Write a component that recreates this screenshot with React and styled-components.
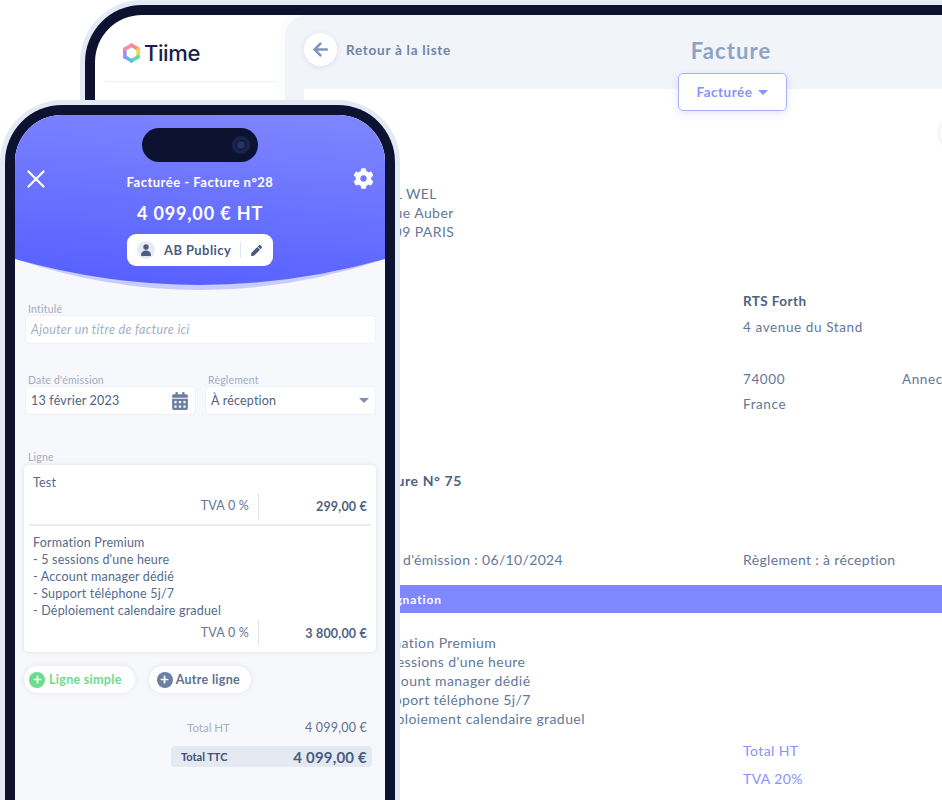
import React from "react";
import styled, { createGlobalStyle } from "styled-components";
import { FaArrowLeft, FaCog, FaPen, FaCalendarAlt, FaPlus } from "react-icons/fa";

const Global = createGlobalStyle`
  html, body { margin: 0; padding: 0; background: #fff; }
  * { box-sizing: border-box; }
  body { font-family: "Lato", "Noto Sans", sans-serif; }
`;

const Stage = styled.div`
  position: relative;
  width: 942px;
  height: 800px;
  overflow: hidden;
  background: #fff;
`;

/* tablet behind */
const Tablet = styled.div`
  position: absolute;
  left: 80px;
  top: 0;
  width: 1112px;
  height: 900px;
  padding: 5px;
  background: #e3eaf3;
  border-radius: 62px;
`;

const TabletBezel = styled.div`
  height: 100%;
  padding: 10px;
  background: #0c1230;
  border-radius: 57px;
`;

const TabletScreen = styled.div`
  display: flex;
  height: 100%;
  background: #fff;
  border-radius: 47px;
  overflow: hidden;
`;

const Sidebar = styled.aside`
  width: 190px;
  flex: none;
  padding: 0 9px 0 10px;
`;

const Logo = styled.div`
  display: flex;
  align-items: center;
  gap: 3px;
  height: 67px;
  padding: 9px 0 0 17px;
  border-bottom: 1px solid #e8eef5;
  font-family: "Inter", sans-serif;
  font-size: 22px;
  font-weight: 500;
  letter-spacing: -0.4px;
  color: #16214d;
`;

const Main = styled.main`
  flex: 1;
  display: flex;
  flex-direction: column;
  background: #f1f4f9;
  border-radius: 22px 0 0 0;
  box-shadow: 0 0 10px rgba(120, 140, 170, 0.08);
  position: relative;
`;

const MainHeader = styled.header`
  position: relative;
  display: flex;
  align-items: center;
  justify-content: center;
  height: 74px;
  flex: none;
  padding-bottom: 4px;
`;

const BackLink = styled.div`
  position: absolute;
  left: 19px;
  top: 18px;
  display: flex;
  align-items: center;
  gap: 9px;
  font-size: 13.5px;
  font-weight: 700;
  letter-spacing: 0.75px;
  color: #6e84a6;
`;

const BackCircle = styled.span`
  display: flex;
  align-items: center;
  justify-content: center;
  width: 33px;
  height: 33px;
  border-radius: 50%;
  background: #fff;
  color: #7d95ba;
  font-size: 17px;
  box-shadow: 0 1px 5px rgba(120, 140, 170, 0.2);
`;

const PageTitle = styled.h1`
  margin: 0;
  font-size: 22px;
  font-weight: 700;
  letter-spacing: 1.1px;
  color: #8ea3c2;
`;

const StatusButton = styled.div`
  position: absolute;
  left: 393px;
  top: 58px;
  z-index: 2;
  display: flex;
  align-items: center;
  justify-content: center;
  gap: 6px;
  width: 109px;
  height: 38px;
  background: #fff;
  border: 1px solid #a8aeff;
  border-radius: 5px;
  font-size: 13.5px;
  font-weight: 700;
  letter-spacing: 0.5px;
  color: #8a91ff;
  box-shadow: 0 3px 8px rgba(128, 136, 255, 0.2);
`;

const Caret = styled.span`
  width: 0;
  height: 0;
  border-left: ${(p) => p.$size}px solid transparent;
  border-right: ${(p) => p.$size}px solid transparent;
  border-top: ${(p) => p.$size}px solid ${(p) => p.$color};
`;

const EdgeButton = styled.span`
  position: absolute;
  left: 655px;
  top: 103px;
  width: 30px;
  height: 30px;
  border-radius: 50%;
  background: #fff;
  box-shadow: 0 0 5px rgba(120, 140, 170, 0.25);
`;

const Paper = styled.section`
  flex: 1;
  margin-left: 19px;
  padding: 95px 0 0 64px;
  background: #fff;
  font-size: 14px;
  line-height: 19px;
  letter-spacing: 0.42px;
  color: #62779a;
`;

const AddressLine = styled.div``;

const ClientBlock = styled.div`
  margin: 51px 0 0 375px;
`;

const ClientName = styled.div`
  font-size: 13.5px;
  font-weight: 700;
  color: #4d6182;
`;

const ClientLine = styled.div`
  margin-top: 7px;
  font-size: 13.5px;
  letter-spacing: 0.6px;
`;

const ClientCityRow = styled.div`
  display: flex;
  margin-top: 33px;
  font-size: 13.5px;
  letter-spacing: 0.6px;
`;

const ClientCity = styled.span`
  width: 159px;
`;

const FranceLine = styled(ClientLine)`
  margin-top: 6px;
`;

const InvoiceNumber = styled.h2`
  margin: 57px 0 0;
  font-size: 14px;
  line-height: 19px;
  font-weight: 700;
  letter-spacing: 0.6px;
  color: #4d6182;
`;

const MetaRow = styled.div`
  display: grid;
  grid-template-columns: 375px 1fr;
  margin-top: 60px;
  letter-spacing: 0.34px;
`;

const TableBand = styled.div`
  display: flex;
  align-items: center;
  height: 28px;
  margin: 16px 0 20px -64px;
  padding-left: 64px;
  background: #8088ff;
  color: #fff;
  font-size: 12px;
  font-weight: 700;
  letter-spacing: 0.9px;
`;

const TotalsBlock = styled.div`
  margin: 13px 0 0 375px;
  color: #8a91ff;
`;

const TotalLine = styled.div`
  margin-bottom: 9px;
`;

/* phone on top */
const Phone = styled.div`
  position: absolute;
  left: 0;
  top: 100px;
  z-index: 3;
  width: 400px;
  height: 800px;
  padding: 5px;
  background: #e3eaf3;
  border-radius: 62px;
`;

const PhoneBezel = styled.div`
  height: 100%;
  padding: 10px;
  background: #0c1230;
  border-radius: 57px;
`;

const PhoneScreen = styled.div`
  height: 100%;
  background: #f7f8fb;
  border-radius: 47px;
  overflow: hidden;
  color: #566a8c;
`;

const PhoneHeader = styled.header`
  position: relative;
  height: 175px;
  color: #fff;
`;

const HeaderWave = styled.svg`
  position: absolute;
  inset: 0;
`;

const HeaderContent = styled.div`
  position: relative;
  display: flex;
  flex-direction: column;
  align-items: center;
  padding-top: 13px;
`;

const Island = styled.div`
  display: flex;
  align-items: center;
  justify-content: flex-end;
  width: 116px;
  height: 34px;
  padding-right: 8px;
  background: #0c1230;
  border-radius: 17px;
`;

const Camera = styled.span`
  display: flex;
  align-items: center;
  justify-content: center;
  width: 18px;
  height: 18px;
  border-radius: 50%;
  background: #18244f;
  &::after {
    content: "";
    width: 8px;
    height: 8px;
    border-radius: 50%;
    border: 1.5px solid #0c1230;
    background: #26345f;
  }
`;

const HeaderBar = styled.div`
  align-self: stretch;
  display: flex;
  align-items: flex-start;
  justify-content: space-between;
  height: 22px;
  margin-top: 6px;
  padding: 0 11px 0 12px;
`;

const CloseSvg = styled.svg`
  margin-top: 2px;
`;

const InvoiceTitle = styled.div`
  padding: 6px 0 0 2px;
  font-size: 13px;
  font-weight: 700;
  letter-spacing: 0.5px;
`;

const Amount = styled.div`
  margin-top: 11px;
  font-size: 18px;
  line-height: 24px;
  font-weight: 700;
  letter-spacing: 0.85px;
`;

const ClientChip = styled.div`
  display: flex;
  align-items: center;
  width: 146px;
  height: 32px;
  margin-top: 9px;
  padding: 0 10px;
  background: #fff;
  border-radius: 9px;
  color: #4a5c80;
  font-size: 13px;
  font-weight: 700;
  letter-spacing: 0.4px;
`;

const Avatar = styled.span`
  display: flex;
  align-items: center;
  justify-content: center;
  width: 18px;
  height: 18px;
  margin-right: 9px;
  border-radius: 50%;
  background: #e6ebf3;
`;

const ChipDivider = styled.span`
  width: 1px;
  height: 16px;
  margin: 0 10px 0 9px;
  background: #dfe4ec;
`;

const Form = styled.div`
  padding: 13px 9px 0 10px;
`;

const Grid2 = styled.div`
  display: grid;
  grid-template-columns: 171px 171px;
  gap: 9px;
  margin-top: 30px;
`;

const Label = styled.div`
  padding-left: 3px;
  font-size: 10.5px;
  line-height: 12px;
  letter-spacing: 0.2px;
  color: #a0acc4;
`;

const Input = styled.div`
  display: flex;
  align-items: center;
  justify-content: space-between;
  height: 29px;
  padding: 0 6px 0 5px;
  background: #fff;
  border: 1px solid #eef1f6;
  border-radius: 5px;
  font-size: 12.5px;
  letter-spacing: ${(p) => (p.$placeholder ? 0.33 : 0.2)}px;
  color: ${(p) => (p.$placeholder ? "#a3aec6" : "#4f6282")};
  font-style: ${(p) => (p.$placeholder ? "italic" : "normal")};
`;

const LinesSection = styled.div`
  margin-top: 36px;
`;

const LinesCard = styled.div`
  margin: 2px 0 0 -1px;
  padding: 9px 5px 6px;
  background: #fff;
  border-radius: 5px;
  box-shadow: 0 0 5px rgba(120, 140, 170, 0.2);
  font-size: 12.5px;
  line-height: 17px;
  letter-spacing: 0.2px;
`;

const LineText = styled.div`
  padding-left: 4px;
`;

const LineMeta = styled.div`
  display: flex;
  align-items: center;
  justify-content: flex-end;
  height: 26px;
  margin-top: ${(p) => p.$gap}px;
  padding-right: 4px;
  font-size: 12.5px;
`;

const Tva = styled.span`
  padding-right: 9px;
  line-height: 26px;
  border-right: 1px solid #dfe4ec;
  color: #62779a;
`;

const LinePrice = styled.span`
  width: 108px;
  text-align: right;
  font-weight: 700;
  color: #4f6282;
`;

const LineSep = styled.div`
  height: 2px;
  margin: 5px 0 8px;
  background: #e6ebf2;
`;

const AddRow = styled.div`
  display: flex;
  gap: 14px;
  margin: 14px 0 0 -1px;
`;

const AddButton = styled.div`
  display: flex;
  align-items: center;
  gap: ${(p) => p.$gap}px;
  height: 27px;
  padding: 0 ${(p) => p.$right}px 0 ${(p) => p.$left}px;
  background: #fff;
  border-radius: 14px;
  box-shadow: 0 0 5px rgba(120, 140, 170, 0.18);
  font-size: 12.5px;
  font-weight: 700;
  letter-spacing: 0.3px;
  color: ${(p) => p.$color};
`;

const PlusDot = styled.span`
  display: flex;
  align-items: center;
  justify-content: center;
  width: 16px;
  height: 16px;
  border-radius: 50%;
  background: ${(p) => p.$color};
  color: #fff;
  font-size: 9px;
`;

const Totals = styled.div`
  margin: 24px 4px 0 146px;
`;

const TotalRow = styled.div`
  display: flex;
  justify-content: space-between;
  align-items: center;
  height: 21px;
  padding: 0 5px 0 ${(p) => (p.$strong ? 10 : 16)}px;
  background: ${(p) => (p.$strong ? "#e4e9f2" : "transparent")};
  border-radius: 4px;
  margin-bottom: 8px;
`;

const TotalLabel = styled.span`
  font-size: ${(p) => (p.$strong ? 11 : 11.5)}px;
  font-weight: ${(p) => (p.$strong ? 700 : 400)};
  color: ${(p) => (p.$strong ? "#3f5073" : "#a3b0c8")};
`;

const TotalValue = styled.span`
  font-size: ${(p) => (p.$strong ? 15 : 12.5)}px;
  font-weight: ${(p) => (p.$strong ? 700 : 400)};
  color: ${(p) => (p.$strong ? "#4a5c80" : "#5e7192")};
  letter-spacing: 0.2px;
`;

function LogoMark() {
  const segs = [
    ["M9 2.5 L15 6", "#f98a6e"],
    ["M15 6 L15 13", "#f7d04e"],
    ["M15 13 L9 16.5", "#5fdba0"],
    ["M9 16.5 L3 13", "#58b8f0"],
    ["M3 13 L3 6", "#a08bf5"],
    ["M3 6 L9 2.5", "#f58ab0"],
  ];
  return (
    <svg width="19" height="20" viewBox="1 0.5 16 18" fill="none">
      {segs.map(([d, c]) => (
        <path key={c} d={d} stroke={c} strokeWidth="3.2" strokeLinecap="round" />
      ))}
    </svg>
  );
}

function UserGlyph() {
  return (
    <svg width="10" height="12" viewBox="0 0 10 12" fill="#4a5c80">
      <circle cx="5" cy="3" r="2.7" />
      <path d="M0 11c0-3 2-4.5 5-4.5s5 1.5 5 4.5c0 .6-.5 1-1 1H1c-.5 0-1-.4-1-1z" />
    </svg>
  );
}

function CloseGlyph() {
  return (
    <CloseSvg width="18" height="18" viewBox="0 0 18 18" stroke="#fff" strokeWidth="2.2" strokeLinecap="round">
      <path d="M1.5 1.5 L16.5 16.5 M16.5 1.5 L1.5 16.5" />
    </CloseSvg>
  );
}

export default function App() {
  return (
    <Stage>
      <Global />
      <Tablet>
        <TabletBezel>
          <TabletScreen>
            <Sidebar>
              <Logo>
                <LogoMark />
                Tiime
              </Logo>
            </Sidebar>
            <Main>
              <MainHeader>
                <BackLink>
                  <BackCircle>
                    <FaArrowLeft />
                  </BackCircle>
                  Retour à la liste
                </BackLink>
                <PageTitle>Facture</PageTitle>
              </MainHeader>
              <StatusButton>
                Facturée
                <Caret $size={5.5} $color="#8a91ff" />
              </StatusButton>
              <EdgeButton />
              <Paper>
                <AddressLine>SARL WEL</AddressLine>
                <AddressLine>12 rue Auber</AddressLine>
                <AddressLine>75009 PARIS</AddressLine>
                <ClientBlock>
                  <ClientName>RTS Forth</ClientName>
                  <ClientLine>4 avenue du Stand</ClientLine>
                  <ClientCityRow>
                    <ClientCity>74000</ClientCity>
                    <span>Annecy</span>
                  </ClientCityRow>
                  <FranceLine>France</FranceLine>
                </ClientBlock>
                <InvoiceNumber>Facture N° 75</InvoiceNumber>
                <MetaRow>
                  <span>Date d'émission : 06/10/2024</span>
                  <span>Règlement : à réception</span>
                </MetaRow>
                <TableBand>Désignation</TableBand>
                <div>Formation Premium</div>
                <div>- 5 sessions d'une heure</div>
                <div>- Account manager dédié</div>
                <div>- Support téléphone 5j/7</div>
                <div>- Déploiement calendaire graduel</div>
                <TotalsBlock>
                  <TotalLine>Total HT</TotalLine>
                  <TotalLine>TVA 20%</TotalLine>
                </TotalsBlock>
              </Paper>
            </Main>
          </TabletScreen>
        </TabletBezel>
      </Tablet>

      <Phone>
        <PhoneBezel>
          <PhoneScreen>
            <PhoneHeader>
              <HeaderWave width="370" height="175" viewBox="0 0 370 175">
                <defs>
                  <linearGradient id="head" x1="0.6" y1="0" x2="0.4" y2="1">
                    <stop offset="0" stopColor="#7d84ff" />
                    <stop offset="1" stopColor="#5761ff" />
                  </linearGradient>
                </defs>
                <path d="M0 144 Q185 206 370 144 V0 H0 Z" fill="#c9ccff" />
                <path d="M0 144 Q185 196 370 144 V0 H0 Z" fill="url(#head)" />
              </HeaderWave>
              <HeaderContent>
                <Island>
                  <Camera />
                </Island>
                <HeaderBar>
                  <CloseGlyph />
                  <InvoiceTitle>Facturée - Facture n°28</InvoiceTitle>
                  <FaCog size={21} />
                </HeaderBar>
                <Amount>4 099,00 € HT</Amount>
                <ClientChip>
                  <Avatar>
                    <UserGlyph />
                  </Avatar>
                  AB Publicy
                  <ChipDivider />
                  <FaPen size={11} />
                </ClientChip>
              </HeaderContent>
            </PhoneHeader>
            <Form>
              <Label>Intitulé</Label>
              <Input $placeholder>Ajouter un titre de facture ici</Input>
              <Grid2>
                <div>
                  <Label>Date d'émission</Label>
                  <Input>
                    13 février 2023
                    <FaCalendarAlt size={18} color="#6a7fa3" />
                  </Input>
                </div>
                <div>
                  <Label>Règlement</Label>
                  <Input>
                    À réception
                    <Caret $size={5} $color="#7f90ae" />
                  </Input>
                </div>
              </Grid2>
              <LinesSection>
                <Label>Ligne</Label>
                <LinesCard>
                  <LineText>Test</LineText>
                  <LineMeta $gap={2}>
                    <Tva>TVA 0 %</Tva>
                    <LinePrice>299,00 €</LinePrice>
                  </LineMeta>
                  <LineSep />
                  <LineText>Formation Premium</LineText>
                  <LineText>- 5 sessions d'une heure</LineText>
                  <LineText>- Account manager dédié</LineText>
                  <LineText>- Support téléphone 5j/7</LineText>
                  <LineText>- Déploiement calendaire graduel</LineText>
                  <LineMeta $gap={1}>
                    <Tva>TVA 0 %</Tva>
                    <LinePrice>3 800,00 €</LinePrice>
                  </LineMeta>
                </LinesCard>
              </LinesSection>
              <AddRow>
                <AddButton $color="#6cdb8c" $gap={4} $left={5} $right={13}>
                  <PlusDot $color="#6cdb8c">
                    <FaPlus />
                  </PlusDot>
                  Ligne simple
                </AddButton>
                <AddButton $color="#5e7192" $gap={3} $left={8} $right={11}>
                  <PlusDot $color="#6a7fa3">
                    <FaPlus />
                  </PlusDot>
                  Autre ligne
                </AddButton>
              </AddRow>
              <Totals>
                <TotalRow>
                  <TotalLabel>Total HT</TotalLabel>
                  <TotalValue>4 099,00 €</TotalValue>
                </TotalRow>
                <TotalRow $strong>
                  <TotalLabel $strong>Total TTC</TotalLabel>
                  <TotalValue $strong>4 099,00 €</TotalValue>
                </TotalRow>
              </Totals>
            </Form>
          </PhoneScreen>
        </PhoneBezel>
      </Phone>
    </Stage>
  );
}
